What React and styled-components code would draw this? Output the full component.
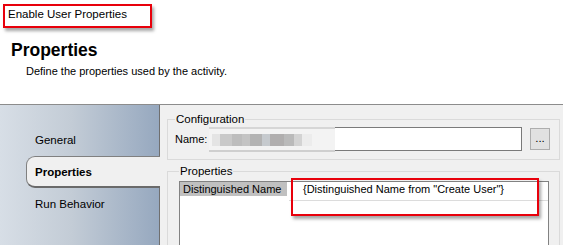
import React from "react";
import styled, { createGlobalStyle } from "styled-components";

const GlobalStyle = createGlobalStyle`
    body {
        margin: 0;
        background: #ffffff;
        font-family: "Liberation Sans", Arial, sans-serif;
        color: #000000;
    }
`;

const Page = styled.div`
    position: relative;
    width: 563px;
    height: 245px;
    overflow: hidden;
    display: flex;
    flex-direction: column;
    font-size: 11px;
`;

// 빨간 강조 박스 (스크린샷 위에 덧그린 표시)
const Highlight = styled.div`
    position: absolute;
    border: 2px solid #e8000b;
    box-shadow: 2px 3px 3px rgba(0, 0, 0, 0.35);
    pointer-events: none;
`;

const Header = styled.div`
    height: 104px;
    padding: 0 0 0 8px;
    box-sizing: border-box;
`;

const ActivityName = styled.div`
    height: 30px;
    line-height: 28px;
    font-size: 11.5px;
`;

const Title = styled.h2`
    margin: 10px 0 0 3px;
    font-size: 17.5px;
    font-weight: bold;
    line-height: 20px;
`;

const Subtitle = styled.p`
    margin: 5px 0 0 18px;
    font-size: 11px;
`;

const Divider = styled.div`
    height: 1px;
    background: #8c8c8c;
`;

const Main = styled.div`
    flex: 1;
    display: flex;
    min-height: 0;
`;

const Sidebar = styled.div`
    width: 160px;
    flex-shrink: 0;
    background: linear-gradient(to right, #d7dee6 0%, #c3ccd6 45%, #96a8bf 100%);
    border-right: 1px solid #6f6f6f;
    padding-top: 19px;
    box-sizing: border-box;
    display: flex;
    flex-direction: column;
`;

const Tab = styled.div`
    height: 32px;
    display: flex;
    align-items: center;
    box-sizing: border-box;
    font-size: 11.5px;
    padding-left: ${(p) => (p.$active ? "8px" : "35px")};
    margin-left: ${(p) => (p.$active ? "26px" : "0")};
    margin-right: ${(p) => (p.$active ? "-1px" : "0")};
    font-weight: ${(p) => (p.$active ? "bold" : "normal")};
    background: ${(p) => (p.$active ? "#f0f0f0" : "transparent")};
    border: ${(p) => (p.$active ? "1px solid #808080" : "none")};
    border-bottom: ${(p) => (p.$active ? "2px solid #6a6a6a" : "none")};
    border-right: none;
    border-radius: ${(p) => (p.$active ? "9px 0 0 9px" : "0")};
`;

const Content = styled.div`
    flex: 1;
    background: #f0f0f0;
    padding: 8px 3px 0 7px;
    display: flex;
    flex-direction: column;
    gap: 5px;
`;

const Group = styled.fieldset`
    margin: 0;
    border: 1px solid #dadada;
    padding: ${(p) => (p.$grow ? "2px 10px 0 11px" : "2px 6px 8px 7px")};
    flex: ${(p) => (p.$grow ? 1 : "none")};
    min-width: 0;
`;

const Legend = styled.legend`
    padding: 0 1px;
    font-size: 11.5px;
`;

const NameRow = styled.div`
    display: flex;
    align-items: center;
    gap: 8px;
`;

const Label = styled.span`
    width: 29px;
`;

const TextBox = styled.div`
    position: relative;
    width: 310px;
    height: 24px;
    box-sizing: border-box;
    background: #ffffff;
    border: 1px solid #7a7a7a;
`;

// 가려진 이름 영역 (모자이크)
const Redacted = styled.div`
    position: absolute;
    left: -4px;
    top: -1px;
    width: 126px;
    height: 25px;
    background: #f3f3f3;
    border-top: 2px solid #d6d6d6;
    border-bottom: 2px solid #cfcfcf;
    box-sizing: border-box;
    display: flex;
    align-items: center;
    padding-left: 3px;
`;

const Pixel = styled.span`
    width: ${(p) => p.$w}px;
    height: 12px;
    background: ${(p) => p.$c};
    filter: blur(0.6px);
`;

const DotsButton = styled.button`
    width: 20px;
    height: 22px;
    padding: 0 0 5px;
    border: 1px solid #adadad;
    background: #e1e1e1;
    font-family: inherit;
    font-size: 11.5px;
    line-height: 1;
    display: flex;
    align-items: flex-end;
    justify-content: center;
`;

const Grid = styled.div`
    margin-top: 2px;
    height: 70px;
    background: #ffffff;
    border: 1px solid #828282;
    display: flex;
    align-items: flex-start;
`;

const KeyCell = styled.div`
    width: 104px;
    height: 14px;
    line-height: 14px;
    background: #c0c0c0;
    padding-left: 3px;
    font-size: 11px;
    white-space: nowrap;
`;

const ValueCell = styled.div`
    flex: 1;
    margin-left: 2px;
    height: 18px;
    line-height: 15px;
    padding-left: 14px;
    border-bottom: 1px solid #dcdcdc;
    font-size: 11px;
`;

const pixels = [
    ["#e4e4e4", 8],
    ["#c9c9c9", 12],
    ["#bdbdbd", 10],
    ["#c4c4c4", 8],
    ["#b3b3b3", 12],
    ["#c6cace", 8],
    ["#b0aeae", 14],
    ["#bababa", 10],
    ["#d3d3d3", 8],
    ["#ececec", 10],
];

function App() {
    return (
        <Page>
            <GlobalStyle />
            <Header>
                <ActivityName>Enable User Properties</ActivityName>
                <Title>Properties</Title>
                <Subtitle>Define the properties used by the activity.</Subtitle>
            </Header>
            <Divider />
            <Main>
                <Sidebar>
                    <Tab>General</Tab>
                    <Tab $active>Properties</Tab>
                    <Tab>Run Behavior</Tab>
                </Sidebar>
                <Content>
                    <Group>
                        <Legend>Configuration</Legend>
                        <NameRow>
                            <Label>Name:</Label>
                            <TextBox>
                                <Redacted>
                                    {pixels.map(([c, w], i) => (
                                        <Pixel key={i} $c={c} $w={w} />
                                    ))}
                                </Redacted>
                            </TextBox>
                            <DotsButton>...</DotsButton>
                        </NameRow>
                    </Group>
                    <Group $grow>
                        <Legend>Properties</Legend>
                        <Grid>
                            <KeyCell>Distinguished Name</KeyCell>
                            <ValueCell>{'{Distinguished Name from "Create User"}'}</ValueCell>
                        </Grid>
                    </Group>
                </Content>
            </Main>
            <Highlight style={{ left: 3, top: 4, width: 145, height: 20 }} />
            <Highlight style={{ left: 291, top: 178, width: 244, height: 34 }} />
        </Page>
    );
}

export default App;
